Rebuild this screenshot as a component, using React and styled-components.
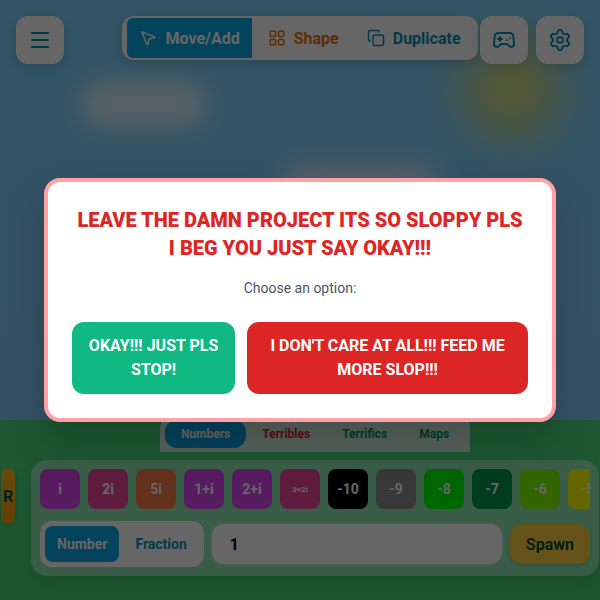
import styled, { createGlobalStyle, css } from 'styled-components';
import { Copy, Gamepad2, LayoutGrid, Menu, MousePointer2, Settings } from 'lucide-react';

const tabs = [
	{ label: 'Numbers', active: true },
	{ label: 'Terribles', color: '#e11d2e' },
	{ label: 'Terrifics', color: '#059669' },
	{ label: 'Maps', color: '#059669' },
];

const tiles = [
	{ label: 'i', color: '#d946ef' },
	{ label: '2i', color: '#f0479f' },
	{ label: '5i', color: '#f97b4a' },
	{ label: '1+i', color: '#d946ef' },
	{ label: '2+i', color: '#d946ef' },
	{ label: '3+2i', color: '#f0479f', small: true },
	{ label: '-10', color: '#000000' },
	{ label: '-9', color: '#8c8c8c' },
	{ label: '-8', color: '#00ff00' },
	{ label: '-7', color: '#00994c' },
	{ label: '-6', color: '#80ff00' },
	{ label: '-5', color: '#ffff00' },
];

export default function App() {
	return (
		<>
			<GlobalStyle />
			<Page>
				<Scenery>
					<Sun />
					<Cloud $left={80} $top={80} $width={128} $height={48} />
					<Cloud $left={280} $top={164} $width={160} $height={56} />
					<Grass />
				</Scenery>

				<TopBar>
					<IconButton type="button" aria-label="Menu">
						<Menu size={24} />
					</IconButton>
					<Toolbar>
						<ToolButton type="button" $active>
							<MousePointer2 size={18} />
							Move/Add
						</ToolButton>
						<ToolButton type="button" $color="#e8710a">
							<LayoutGrid size={18} />
							Shape
						</ToolButton>
						<ToolButton type="button">
							<Copy size={18} />
							Duplicate
						</ToolButton>
					</Toolbar>
					<TopActions>
						<IconButton type="button" aria-label="Games">
							<Gamepad2 size={24} />
						</IconButton>
						<IconButton type="button" aria-label="Settings">
							<Settings size={24} />
						</IconButton>
					</TopActions>
				</TopBar>

				<BottomArea>
					<Tabs>
						{tabs.map(({ label, active, color }) => (
							<Tab key={label} type="button" $active={active} $color={color}>
								{label}
							</Tab>
						))}
					</Tabs>
					<Dock>
						<ResetButton type="button">R</ResetButton>
						<Panel>
							<TileRow>
								{tiles.map(({ label, color, small }) => (
									<Tile key={label} type="button" $color={color} $small={small}>
										{label}
									</Tile>
								))}
							</TileRow>
							<SpawnRow>
								<ModeSwitch>
									<ModeButton type="button" $active>
										Number
									</ModeButton>
									<ModeButton type="button">Fraction</ModeButton>
								</ModeSwitch>
								<ValueInput aria-label="Value" defaultValue="1" />
								<SpawnButton type="button">Spawn</SpawnButton>
							</SpawnRow>
						</Panel>
					</Dock>
				</BottomArea>

				<Overlay>
					<Dialog role="dialog" aria-modal="true" aria-labelledby="dialog-title">
						<DialogTitle id="dialog-title">
							LEAVE THE DAMN PROJECT ITS SO SLOPPY PLS I BEG YOU JUST SAY OKAY!!!
						</DialogTitle>
						<DialogText>Choose an option:</DialogText>
						<DialogActions>
							<DialogButton type="button" $color="#10b981">
								OKAY!!! JUST PLS STOP!
							</DialogButton>
							<DialogButton type="button" $color="#dc2626">
								I DON'T CARE AT ALL!!! FEED ME MORE SLOP!!!
							</DialogButton>
						</DialogActions>
					</Dialog>
				</Overlay>
			</Page>
		</>
	);
}

const GlobalStyle = createGlobalStyle`
	*, *::before, *::after {
		box-sizing: border-box;
	}
	body {
		margin: 0;
		font-family: Roboto, 'Liberation Sans', sans-serif;
	}
	button, input {
		font: inherit;
		border: none;
		margin: 0;
	}
	button {
		cursor: pointer;
	}
`;

const activeFill = css`
	color: #ffffff;
	background: #0aa8e6;
`;

const Page = styled.div`
	position: relative;
	display: flex;
	flex-direction: column;
	justify-content: space-between;
	min-height: 100vh;
	overflow: hidden;
`;

/* sky, sun, clouds and grass behind the controls */
const Scenery = styled.div`
	position: absolute;
	inset: 0;
	background: linear-gradient(#7dd3fc, #8acbfc);
`;
const Sun = styled.div`
	position: absolute;
	top: 40px;
	right: 40px;
	width: 96px;
	height: 96px;
	border-radius: 50%;
	background: #fde047;
	opacity: 0.7;
	filter: blur(24px);
`;
const Cloud = styled.div`
	position: absolute;
	left: ${({ $left }) => $left}px;
	top: ${({ $top }) => $top}px;
	width: ${({ $width }) => $width}px;
	height: ${({ $height }) => $height}px;
	border-radius: 24px;
	background: #ffffff;
	opacity: 0.7;
	filter: blur(12px);
`;
const Grass = styled.div`
	position: absolute;
	left: 0;
	right: 0;
	bottom: 0;
	height: 30%;
	background: linear-gradient(#4ade80, #44d67a);
`;

const TopBar = styled.header`
	position: relative;
	display: grid;
	grid-template-columns: 1fr auto 1fr;
	align-items: start;
	padding: 16px;
`;
const IconButton = styled.button`
	display: flex;
	align-items: center;
	justify-content: center;
	width: 48px;
	height: 48px;
	padding: 0;
	border-radius: 12px;
	color: #0891b2;
	background: #ffffff;
	box-shadow: 0 4px 12px rgba(0, 0, 0, 0.15);
`;
const Toolbar = styled.div`
	display: flex;
	gap: 4px;
	padding: 2px 5px;
	border-radius: 12px;
	background: #ffffff;
	box-shadow: 0 4px 12px rgba(0, 0, 0, 0.15);
`;
const ToolButton = styled.button`
	display: flex;
	align-items: center;
	gap: 8px;
	height: 40px;
	padding: 0 12px;
	border-radius: 6px 0 0 6px;
	font-size: 16px;
	font-weight: 700;
	color: ${({ $color }) => $color || '#0891b2'};
	background: transparent;
	${({ $active }) => $active && activeFill}
`;
const TopActions = styled.div`
	display: flex;
	justify-content: flex-end;
	gap: 8px;
`;

const BottomArea = styled.footer`
	position: relative;
	display: flex;
	flex-direction: column;
	align-items: center;
	gap: 8px;
	padding: 0 1px 24px;
`;
const Tabs = styled.nav`
	display: flex;
	margin-left: 30px;
	padding: 4px 5px;
	border-radius: 12px 12px 0 0;
	background: rgba(255, 255, 255, 0.8);
`;
const Tab = styled.button`
	height: 28px;
	padding: 0 16px;
	border-radius: 12px;
	font-size: 12px;
	font-weight: 700;
	color: ${({ $color }) => $color};
	background: transparent;
	${({ $active }) => $active && activeFill}
`;
const Dock = styled.div`
	display: flex;
	align-items: flex-start;
	gap: 16px;
	width: 100%;
`;
const ResetButton = styled.button`
	display: flex;
	align-items: center;
	justify-content: center;
	flex: none;
	width: 14px;
	height: 56px;
	margin-top: 8px;
	padding: 0;
	border-radius: 8px;
	font-size: 16px;
	font-weight: 700;
	color: #064e3b;
	background: linear-gradient(#fbbf24, #f59e0b);
	box-shadow: 0 2px 6px rgba(0, 0, 0, 0.2);
`;
const Panel = styled.section`
	display: flex;
	flex: 1;
	flex-direction: column;
	gap: 12px;
	min-width: 0;
	padding: 9px;
	border-radius: 16px;
	background: rgba(255, 255, 255, 0.4);
	box-shadow: 0 8px 20px rgba(0, 0, 0, 0.1);
`;
const TileRow = styled.div`
	display: flex;
	gap: 8px;
	overflow: hidden;
`;
const Tile = styled.button`
	flex: none;
	width: 40px;
	height: 40px;
	padding: 0;
	border-radius: 8px;
	font-size: ${({ $small }) => ($small ? 8 : 14)}px;
	font-weight: 700;
	color: #ffffff;
	background: ${({ $color }) => $color};
`;
const SpawnRow = styled.div`
	display: flex;
	align-items: center;
	gap: 8px;
`;
const ModeSwitch = styled.div`
	display: flex;
	gap: 4px;
	padding: 5px;
	border-radius: 12px;
	background: #ffffff;
`;
const ModeButton = styled.button`
	height: 36px;
	padding: 0 12px;
	border-radius: 8px;
	font-size: 14px;
	font-weight: 700;
	color: #0891b2;
	background: transparent;
	${({ $active }) => $active && activeFill}
`;
const ValueInput = styled.input`
	flex: 1;
	min-width: 0;
	height: 40px;
	padding: 0 18px;
	border-radius: 12px;
	font-size: 16px;
	font-weight: 700;
	color: #000000;
	background: #ffffff;
	box-shadow: 0 0 4px rgba(255, 255, 255, 0.6);
`;
const SpawnButton = styled.button`
	height: 40px;
	padding: 0 16px;
	border-radius: 12px;
	font-size: 16px;
	font-weight: 700;
	color: #064e3b;
	background: #fcd03f;
	box-shadow: 0 2px 4px rgba(0, 0, 0, 0.15);
`;

const Overlay = styled.div`
	position: absolute;
	inset: 0;
	display: flex;
	align-items: center;
	justify-content: center;
	padding: 16px;
	background: rgba(0, 0, 0, 0.6);
`;
const Dialog = styled.div`
	width: 100%;
	max-width: 512px;
	padding: 24px;
	border: 4px solid #ffa2a7;
	border-radius: 16px;
	text-align: center;
	background: #ffffff;
	box-shadow: 0 20px 40px rgba(0, 0, 0, 0.2);
`;
const DialogTitle = styled.h2`
	margin: 0 0 16px;
	font-size: 20px;
	font-weight: 900;
	line-height: 28px;
	color: #dc2626;
`;
const DialogText = styled.p`
	margin: 0 0 24px;
	font-size: 14px;
	line-height: 20px;
	color: #4b5563;
`;
const DialogActions = styled.div`
	display: flex;
	gap: 12px;
`;
const DialogButton = styled.button`
	padding: 12px 16px;
	border-radius: 12px;
	font-size: 16px;
	font-weight: 700;
	line-height: 24px;
	color: #ffffff;
	background: ${({ $color }) => $color};
`;
